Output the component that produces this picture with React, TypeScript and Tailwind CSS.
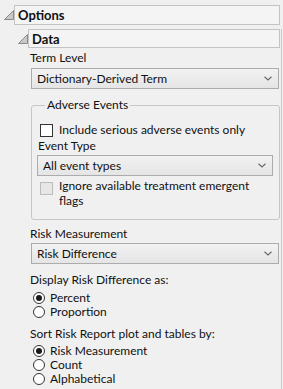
import React from "react";

const Tri = () => (
  <svg width="10" height="10" viewBox="0 0 10 10" className="shrink-0">
    <polygon points="0.5,9.5 9.5,9.5 9.5,0.5" fill="#c8c8c8" stroke="#8a8a8a" strokeWidth="1" strokeLinejoin="miter" />
  </svg>
);

const Chevron = () => (
  <svg width="8" height="5" viewBox="0 0 8 5" className="shrink-0">
    <polyline points="0.5,0.8 4,4 7.5,0.8" fill="none" stroke="#6a6a6a" strokeWidth="1.2" />
  </svg>
);

const Select = ({ label, className = "" }: { label: string; className?: string }) => (
  <div
    className={
      "flex h-[21px] items-center justify-between border border-[#acacac] bg-gradient-to-b from-[#f2f2f2] to-[#e5e5e5] pl-[5px] pr-[6px] " +
      className
    }
  >
    <span className="leading-[15px]">{label}</span>
    <Chevron />
  </div>
);

const Radio = ({ label, checked }: { label: string; checked?: boolean }) => (
  <div className="flex h-[14px] items-center">
    <span className="ml-[3px] flex h-[12px] w-[12px] items-center justify-center rounded-full border border-[#333333] bg-white">
      {checked && <span className="h-[6px] w-[6px] rounded-full bg-[#1a1a1a]" />}
    </span>
    <span className="ml-[5px] leading-[14px]">{label}</span>
  </div>
);

export default function App() {
  return (
    <div
      className="h-[389px] w-[283px] overflow-hidden bg-[#f0f0f0] text-[12px] text-[#111111]"
      style={{ fontFamily: 'Lato, "Noto Sans", sans-serif' }}
    >
      <div className="pt-[5px]">
        {/* Options header */}
        <div className="flex items-center">
          <div className="ml-[4px] flex w-[10px] items-center">
            <Tri />
          </div>
          <div className="flex h-[20px] w-[266px] items-center border border-[#c3c3c3] bg-[#f4f4f4] pl-[3px] text-[13px] font-bold leading-[16px]">
            Options
          </div>
        </div>
        <div className="w-[282px] border-r border-[#c8c8c8]">
          {/* Data header */}
          <div className="mt-[4px] flex items-center">
            <div className="ml-[18px] flex w-[10px] items-center">
              <Tri />
            </div>
            <div className="flex h-[19px] w-[252px] items-center border border-[#c3c3c3] bg-[#f4f4f4] pl-[3px] text-[13px] font-bold leading-[16px]">
              Data
            </div>
          </div>

          <div className="ml-[30px] w-[249px] pb-[10px]">
            <div className="mt-[2px] h-[16px] leading-[16px]">Term Level</div>
            <Select label="Dictionary-Derived Term" className="ml-[1px] mt-[2px] w-[248px]" />

            <fieldset className="ml-[1px] mt-[8px] w-[248px] rounded-[3px] border border-[#c6c6c6] pb-[11px] pl-[8px] pr-[6px]">
              <legend className="ml-[5px] h-[16px] px-[2px] leading-[16px]">Adverse Events</legend>
              <div className="mt-[9px] flex h-[16px] items-center">
                <span className="h-[13px] w-[13px] border border-[#333333] bg-white" />
                <span className="ml-[6px] leading-[16px]">Include serious adverse events only</span>
              </div>
              <div className="-ml-[2px] h-[16px] leading-[16px]">Event Type</div>
              <Select label="All event types" className="-ml-[3px] mt-[1px] w-[236px]" />
              <div className="mt-[2px] flex items-start">
                <span className="mt-[4px] h-[13px] w-[13px] shrink-0 border border-[#bcbcbc] bg-[#e6e6e6]" />
                <span className="ml-[6px] leading-[15px]">
                  Ignore available treatment emergent
                  <br />
                  flags
                </span>
              </div>
            </fieldset>

            <div className="mt-[6px] h-[16px] leading-[16px]">Risk Measurement</div>
            <Select label="Risk Difference" className="ml-[1px] mt-[1px] w-[248px]" />

            <div className="mt-[8px] h-[16px] leading-[16px]">Display Risk Difference as:</div>
            <div className="mt-[3px]">
              <Radio label="Percent" checked />
              <Radio label="Proportion" />
            </div>

            <div className="mt-[7px] h-[16px] leading-[16px]">Sort Risk Report plot and tables by:</div>
            <div className="mt-[2px]">
              <Radio label="Risk Measurement" checked />
              <Radio label="Count" />
              <Radio label="Alphabetical" />
            </div>
          </div>
        </div>
      </div>
    </div>
  );
}
